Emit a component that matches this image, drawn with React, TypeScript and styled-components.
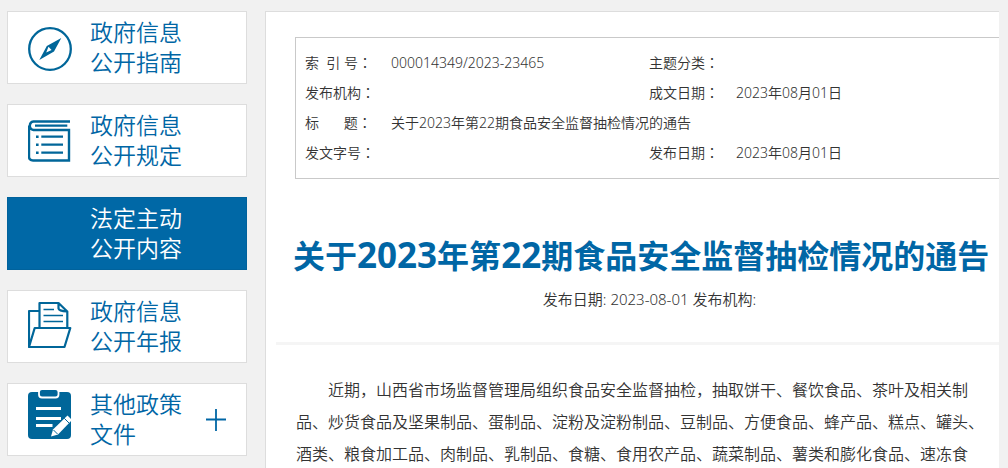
import React from "react";
import styled, { createGlobalStyle } from "styled-components";

const blue = "#0066a5";
const iconBlue = "#006699";

const GlobalStyle = createGlobalStyle`
  * { box-sizing: border-box; }
  body {
    margin: 0;
    background: #f1f1f1;
    color: #333;
    font-family: "Noto Sans", "Noto Sans CJK SC", sans-serif;
    font-size: 14px;
  }
`;

const Page = styled.div`
  display: flex;
  align-items: stretch;
  gap: 18px;
  min-height: 100vh;
  padding: 11px 9px 0 7px;
`;

const Sidebar = styled.nav`
  flex: 0 0 240px;
  display: flex;
  flex-direction: column;
  gap: 20px;
`;

const Card = styled.div<{ $active?: boolean }>`
  display: flex;
  align-items: center;
  height: 73px;
  padding: 0 19px 0 20px;
  border: 1px solid ${(p) => (p.$active ? "#00629c" : "#ddd")};
  background: ${(p) => (p.$active ? "#0068a6" : "#fff")};
  color: ${(p) => (p.$active ? "#fff" : blue)};
`;

const CardLink = styled.a`
  flex: 1;
  display: flex;
  align-items: center;
  gap: 18px;
  color: inherit;
  font-size: 23px;
  font-weight: 350;
  line-height: 30px;
  text-decoration: none;
`;

const CardText = styled.span`
  padding-bottom: 1px;
`;

const Icon = styled.svg`
  flex: none;
  width: 44px;
  height: 71px;
  fill: none;
  stroke: ${iconBlue};
  stroke-width: 2.2;
`;

const Expand = styled.button`
  flex: none;
  width: 22px;
  height: 22px;
  padding: 0;
  border: 0;
  background: none;
  color: ${blue};

  svg { display: block; }
`;

const Panel = styled.main`
  flex: 1;
  min-width: 0;
  border: 1px solid #ddd;
  border-width: 1px 0 0 1px;
  background: #fff;
`;

const MetaBox = styled.div`
  margin: 25px 0 0 29px;
  padding: 10px 9px;
  border: 1px solid #c9c9c9;
  border-right: 0;
`;

const MetaTable = styled.table`
  width: 100%;
  border-collapse: collapse;
  table-layout: fixed;
  font-weight: 350;
  line-height: 30px;

  th, td {
    height: 30px;
    padding: 0;
    font-weight: inherit;
    text-align: left;
    white-space: pre;
  }
`;

/* Full-width colon centred in its cell */
const Colon = styled.span`
  font-family: "Noto Sans CJK TC", sans-serif;
  line-height: 1;
`;

const Head = styled.header`
  margin-left: 10px;
  padding: 51px 0 28px;
  border-bottom: 3px solid #f5f5f5;
`;

const Title = styled.h1`
  margin: 0;
  padding-left: 17px;
  color: ${blue};
  font-size: 32px;
  line-height: 50px;
  white-space: nowrap;
`;

const Digits = styled.span`
  font-size: 35px;
`;

const Published = styled.p`
  margin: 3px 0 0;
  padding-left: 24px;
  font-size: 15px;
  font-weight: 350;
  line-height: 30px;
  text-align: center;
`;

const Article = styled.p`
  margin: 29px 10px 0 30px;
  font-size: 16px;
  font-weight: 350;
  line-height: 32px;
  text-indent: 2em;
`;

const CompassIcon = () => (
  <Icon viewBox="0 0 44 71" aria-hidden="true">
    <circle cx="22" cy="37" r="20.8" strokeWidth="2.3" />
    <path
      d="M33.3 26 26 39.6 11.3 48 18.8 34ZM20.5 34.8 18.2 40.6 23.6 37.9Z"
      fill={iconBlue}
      fillRule="evenodd"
      stroke="none"
    />
  </Icon>
);

const BookIcon = () => (
  <Icon viewBox="0 0 44 71" aria-hidden="true">
    <path d="M42 16.500H5.500A4.300 4.300 0 0 0 5.500 25H41V55.500H5Q1 55.500 1 51.500V20.500" strokeWidth="2.4" />
    <path d="M7 20.700H39.300M13.300 31.700H35M13.300 39.700H35M13.300 47.700H35" />
    <path d="M8 31.700H10.600M8 39.700H10.600M8 47.700H10.600" strokeWidth="2.4" />
  </Icon>
);

const FolderIcon = () => (
  <Icon viewBox="0 0 44 71" strokeLinejoin="round" aria-hidden="true">
    <path d="M11 20H1V56L6.700 37H42.300L36.500 56H1" />
    <path d="M11.500 37V12H30.500L39.300 20.500V37M30.500 12V17.500Q31 20 39 20.500" />
    <path d="M15.500 18.500H26M15.500 24.500H35M15.500 30.500H35" strokeWidth="1.6" />
  </Icon>
);

const ClipboardIcon = () => (
  <Icon viewBox="0 0 44 71" aria-hidden="true">
    <rect y="8" width="43" height="47" rx="4" fill={iconBlue} stroke="none" />
    <rect x="11" y="5" width="19.500" height="8.500" rx="3" fill={iconBlue} stroke="#fff" strokeWidth="1.800" />
    <path d="M8 24.500H33M8 34.500H33M8 41.500H24.500" stroke="#fff" strokeWidth="2.800" />
    <path d="M23 52.500 25 45.500 39.500 31.500 44 36 30 50.500Z" fill="#fff" stroke="none" />
    <path d="M36.300 34.300 41 39M25.500 46 29.500 50" strokeWidth="1" />
  </Icon>
);

const EmptyIcon = () => <Icon viewBox="0 0 44 71" aria-hidden="true" />;

const Label = ({ children }: { children: string }) => (
  <th scope="row">
    {children}
    <Colon>：</Colon>
  </th>
);

const items = [
  { lines: ["政府信息", "公开指南"], Glyph: CompassIcon },
  { lines: ["政府信息", "公开规定"], Glyph: BookIcon },
  { lines: ["法定主动", "公开内容"], Glyph: EmptyIcon, active: true },
  { lines: ["政府信息", "公开年报"], Glyph: FolderIcon },
  { lines: ["其他政策", "文件"], Glyph: ClipboardIcon, expandable: true },
];

export default function App() {
  return (
    <>
      <GlobalStyle />
      <Page>
        <Sidebar>
          {items.map(({ lines, Glyph, active, expandable }) => (
            <Card key={lines.join("")} $active={active}>
              <CardLink href="#" aria-current={active ? "page" : undefined}>
                <Glyph />
                <CardText>
                  {lines[0]}
                  <br />
                  {lines[1]}
                </CardText>
              </CardLink>
              {expandable && (
                <Expand type="button" aria-label="展开">
                  <svg width="22" height="22" viewBox="0 0 22 22" stroke="currentColor" strokeWidth="1.8">
                    <path d="M1 10.500H21M11 0V22" />
                  </svg>
                </Expand>
              )}
            </Card>
          ))}
        </Sidebar>
        <Panel>
          <MetaBox>
            <MetaTable>
              <colgroup>
                <col style={{ width: 86 }} />
                <col style={{ width: 258 }} />
                <col style={{ width: 87 }} />
                <col />
              </colgroup>
              <tbody>
                <tr>
                  <Label>{"索  引 号"}</Label>
                  <td>000014349/2023-23465</td>
                  <Label>主题分类</Label>
                  <td />
                </tr>
                <tr>
                  <Label>发布机构</Label>
                  <td />
                  <Label>成文日期</Label>
                  <td>2023年08月01日</td>
                </tr>
                <tr>
                  <Label>{"标\u3000\u2002 题"}</Label>
                  <td colSpan={3}>关于2023年第22期食品安全监督抽检情况的通告</td>
                </tr>
                <tr>
                  <Label>发文字号</Label>
                  <td />
                  <Label>发布日期</Label>
                  <td>2023年08月01日</td>
                </tr>
              </tbody>
            </MetaTable>
          </MetaBox>
          <Head>
            <Title>
              关于<Digits>2023</Digits>年第<Digits>22</Digits>期食品安全监督抽检情况的通告
            </Title>
            <Published>发布日期: 2023-08-01 发布机构:</Published>
          </Head>
          <Article>
            近期，山西省市场监督管理局组织食品安全监督抽检，抽取饼干、餐饮食品、茶叶及相关制品、炒货食品及坚果制品、蛋制品、淀粉及淀粉制品、豆制品、方便食品、蜂产品、糕点、罐头、酒类、粮食加工品、肉制品、乳制品、食糖、食用农产品、蔬菜制品、薯类和膨化食品、速冻食
          </Article>
        </Panel>
      </Page>
    </>
  );
}
